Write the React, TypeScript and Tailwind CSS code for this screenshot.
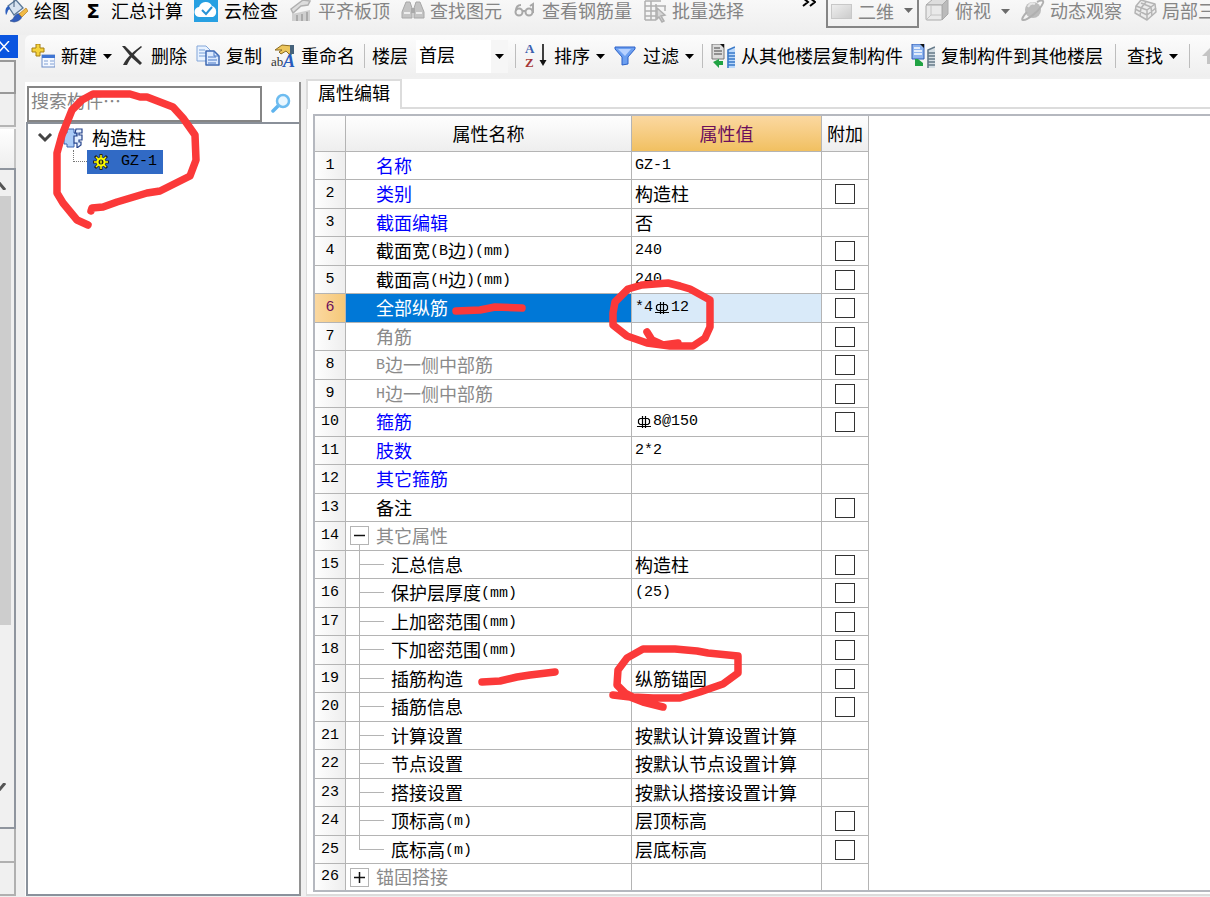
import type { ReactNode } from "react";

type Tone = "blue" | "black" | "gray" | "selected";
type Row = {
  name: string;
  value?: string;
  tone?: Tone;
  check?: boolean;
  branch?: "open" | "closed" | "child" | "last";
};

const rows: Row[] = [
  { name: "名称", value: "GZ-1", tone: "blue" },
  { name: "类别", value: "构造柱", tone: "blue", check: true },
  { name: "截面编辑", value: "否", tone: "blue" },
  { name: "截面宽(B边)(mm)", value: "240", check: true },
  { name: "截面高(H边)(mm)", value: "240", check: true },
  { name: "全部纵筋", value: "*4ф12", tone: "selected", check: true },
  { name: "角筋", tone: "gray", check: true },
  { name: "B边一侧中部筋", tone: "gray", check: true },
  { name: "H边一侧中部筋", tone: "gray", check: true },
  { name: "箍筋", value: "ф8@150", tone: "blue", check: true },
  { name: "肢数", value: "2*2", tone: "blue" },
  { name: "其它箍筋", tone: "blue" },
  { name: "备注", check: true },
  { name: "其它属性", tone: "gray", branch: "open" },
  { name: "汇总信息", value: "构造柱", check: true, branch: "child" },
  { name: "保护层厚度(mm)", value: "(25)", check: true, branch: "child" },
  { name: "上加密范围(mm)", check: true, branch: "child" },
  { name: "下加密范围(mm)", check: true, branch: "child" },
  { name: "插筋构造", value: "纵筋锚固", check: true, branch: "child" },
  { name: "插筋信息", check: true, branch: "child" },
  { name: "计算设置", value: "按默认计算设置计算", branch: "child" },
  { name: "节点设置", value: "按默认节点设置计算", branch: "child" },
  { name: "搭接设置", value: "按默认搭接设置计算", branch: "child" },
  { name: "顶标高(m)", value: "层顶标高", check: true, branch: "child" },
  { name: "底标高(m)", value: "层底标高", check: true, branch: "last" },
  { name: "锚固搭接", tone: "gray", branch: "closed" },
];

const tones: Record<Tone, string> = {
  blue: "text-[#0000ff]",
  black: "text-black",
  gray: "text-[#8a8a8a]",
  selected: "text-white",
};

/* Rebar grade mark: an oval crossed by two bars, with a base line */
function RebarMark() {
  return (
    <svg role="img" aria-label="三级钢" className="inline-block h-4 w-[18px]" viewBox="0 0 18 16" fill="none" stroke="#000" strokeWidth="1.2">
      <path d="M5 4.500h8l1.500 1.500v3L13 10.500H5L3.500 9V6z" />
      <path d="M7.500 2v12M10.500 2v12M2 12.500h14" />
    </svg>
  );
}

/* Latin runs take a half-width face beside full-width characters */
function Mixed({ text }: { text: string }) {
  const wide = /[\u4e00-\u9fff]/.test(text);
  return (
    <span className={`flex items-center whitespace-nowrap leading-[22px] ${wide ? "pb-[2px]" : ""}`}>
      {text.split(/([\x20-\x7e]+|ф)/).filter(Boolean).map((part, i) =>
        part === "ф" ? (
          <RebarMark key={i} />
        ) : /^[\x20-\x7e]/.test(part) ? (
          <span key={i} className={`font-['Liberation_Mono',monospace] text-[15px] ${wide ? "pt-1" : ""}`}>{part}</span>
        ) : (
          <span key={i}>{part}</span>
        )
      )}
    </span>
  );
}

function Caret({ gray }: { gray?: boolean }) {
  return (
    <svg className="h-[5px] w-[9px] shrink-0" viewBox="0 0 9 5" aria-hidden="true">
      <path d="M0 0h9L4.500 5z" fill={gray ? "#6b6b6b" : "#000"} />
    </svg>
  );
}

function Separator() {
  return <span className="h-6 w-px shrink-0 bg-[#bdbdbd]" />;
}

function Tool({ icon, label, gray, caret }: { icon?: ReactNode; label: string; gray?: boolean; caret?: boolean }) {
  return (
    <button type="button" className={`flex shrink-0 items-center ${gray ? "gap-[5px] text-[#858585]" : "gap-[6px] text-black"}`}>
      {icon && <span className="flex h-6 w-6 items-center justify-center">{icon}</span>}
      <span className="pb-[2px]">{label}</span>
      {caret && <Caret gray={gray} />}
    </button>
  );
}

const svg = { className: "h-6 w-6", viewBox: "0 0 24 24", fill: "none", "aria-hidden": true } as const;

const BucketIcon = () => (
  <svg {...svg}>
    <path d="M4 7l8-6 7 8-9 7z" fill="#d7e3f0" stroke="#5a7898" strokeWidth="1.300" />
    <path d="M5 7c-4 1-4 5-3 9 2-2 1-5 4-6" fill="#2d5fbe" />
    <path d="M10 0v8" stroke="#415d7c" />
    <path d="M9 20c2-5 5-6 8-5 2 3 0 7-7 8l-4-1z" fill="#315dbb" stroke="#244489" strokeWidth=".6" />
    <path d="M15 15l7-6 2 3-6 6z" fill="#f1ba45" stroke="#b27c25" strokeWidth=".7" />
  </svg>
);
const CloudIcon = () => (
  <svg {...svg}>
    <path d="M0 0h24v23H0z" fill="#27a0e2" />
    <path d="M6 18a5 5 0 0 1-1-10 7 7 0 0 1 13-1 6 6 0 0 1 1 11z" fill="#fff" />
    <path d="M8 11l4 4 6-7" stroke="#2793d6" strokeWidth="2" />
  </svg>
);
const SlabIcon = () => (
  <svg {...svg}>
    <path d="M2 10L14 1l7 1-2 4-7 1-8 7z" fill="#ddd" stroke="#b0b0b0" strokeWidth="1.500" />
    <path d="M3 15l18-4v11H3z" fill="#cfcfcf" />
    <path d="M8 16v6M13 15v7M18 13v9" stroke="#aaa" strokeWidth="2" />
  </svg>
);
const BinocularsIcon = () => (
  <svg {...svg}>
    <path d="M5 3h4l2 6v10H1v-6zM15 3h4l4 10v6H13V9z" fill="#c4c4c4" stroke="#a8a8a8" />
    <path d="M10 9h4v5h-4z" fill="#aaa" />
    <path d="M3 14h6M15 14h6" stroke="#eee" strokeWidth="2" />
  </svg>
);
const GlassesIcon = () => (
  <svg {...svg} stroke="#a8a8a8" strokeWidth="2">
    <circle cx="6" cy="13" r="3.500" />
    <circle cx="16" cy="13" r="3.500" />
    <path d="M3 12c0-4 2-6 5-6M9 12h4M20 14V5l-3 2" />
  </svg>
);
const BatchIcon = () => (
  <svg {...svg} stroke="#b0b0b0" strokeWidth="1.500">
    <path d="M2 2h16M2 7h21M2 12h12M2 17h11M2 21h11M2 2v19M8 2v19M13 5v16M22 7v5" />
    <path d="M14 9l8 7-4 1 3 5-2 1-3-5-2 2z" fill="#d6d6d6" />
  </svg>
);
const CubeIcon = () => (
  <svg {...svg} stroke="#aaa" strokeLinejoin="round">
    <path d="M1 6l7-6h15l-6 6z" fill="#ddd" />
    <path d="M17 6l6-6v15l-6 6z" fill="#bbb" />
    <rect x="1" y="6" width="16" height="15" rx="1" fill="#e9e9e9" />
    <path d="M6 6v10h11M6 16l-4 4" stroke="#c4c4c4" />
  </svg>
);
const OrbitIcon = () => (
  <svg {...svg}>
    <circle cx="12" cy="11" r="8" fill="#bcbcbc" />
    <path d="M6 13c-4 4-6 8-4 8 3 1 17-9 20-17 1-3-2-3-6-1" stroke="#b0b0b0" strokeWidth="2" />
    <path d="M7 8c2-4 5-4 7-3" stroke="#e7e7e7" strokeWidth="2" />
  </svg>
);
const GridCubeIcon = () => (
  <svg {...svg} stroke="#b4b4b4" strokeWidth="1.500" strokeLinejoin="round">
    <path d="M8 1l14 4 1 8-9 8L2 14l1-7z" fill="#ececec" />
    <path d="M3 7l11 4 8-6M14 11v10M8 9l-1 8M8 4l10 4M18 8l1 9M13 3L8 9M2 10l12 6 9-7" />
  </svg>
);
const NewIcon = () => (
  <svg {...svg}>
    <path d="M5 0h4v4h4v4H9v4H5V8H1V4h4z" fill="#f5d33c" stroke="#a57f13" />
    <rect x="11" y="11" width="13" height="12" fill="#f4f8ff" stroke="#6c8dc7" />
    <path d="M11 11h13v3H11z" fill="#3f75d3" />
    <path d="M13 17h4M19 17h4M13 20h4M19 20h4" stroke="#a6bde2" strokeWidth="1.500" />
  </svg>
);
const DeleteIcon = () => (
  <svg {...svg} fill="#333">
    <path d="M1 2h3l17 17-2 2L10 13z" />
    <path d="M20 2l1 1C14 9 9 14 6 21H2C6 13 13 7 20 2z" />
  </svg>
);
const CopyIcon = () => (
  <svg {...svg} strokeLinejoin="round">
    <path d="M1 2h9l4 4v11H1z" fill="#e8f2ff" stroke="#83a6d9" />
    <path d="M3 6h6M3 9h8M3 12h8" stroke="#779fd8" />
    <path d="M10 7h8l5 5v9H10z" fill="#dceaff" stroke="#3e68b2" strokeWidth="1.500" />
    <path d="M18 7v5h5M12 13h8M12 16h9M12 19h8" stroke="#4a79c4" />
  </svg>
);
const RenameIcon = () => (
  <svg {...svg}>
    <path d="M4 6l7-5 10 1v8h-3l-3-3-5 3-2-2 3-2H5z" fill="#edc65c" stroke="#8d6c22" />
    <path d="M19 1h4v9h-4z" fill="#45627b" />
    <text x="0" y="22" className="fill-[#333] font-['Liberation_Serif',serif] text-[13px]">ab</text>
    <text x="12" y="23" className="fill-[#285bbc] font-['Liberation_Serif',serif] text-[18px] font-bold italic">A</text>
  </svg>
);
const SortIcon = () => (
  <svg {...svg}>
    <text x="1" y="9" className="fill-[#3b5fae] font-['Liberation_Serif',serif] text-[13px] font-bold">A</text>
    <text x="1" y="23" className="fill-[#a63838] font-['Liberation_Serif',serif] text-[13px] font-bold">Z</text>
    <path d="M19 0v20" stroke="#111" strokeWidth="1.600" />
    <path d="M15.500 16h7L19 22z" fill="#111" />
  </svg>
);
const FilterIcon = () => (
  <svg {...svg}>
    <path d="M2 3h20v2l-7 8v7l-6 1v-8L2 5z" fill="#6c9ff0" stroke="#2b61c8" />
    <path d="M5 5h13l-6 7z" fill="#b6d1ff" />
  </svg>
);
function FloorCopyIcon({ to }: { to?: boolean }) {
  return (
    <svg {...svg}>
      <path d="M1 0h12v15H1z" fill={to ? "#8eb4ef" : "#ddd"} stroke={to ? "#315db3" : "#777"} />
      <path d="M9 0h4v4z" fill="#111" />
      <path d="M3 4h6M3 7h8M3 10h8" stroke={to ? "#fff" : "#777"} strokeWidth="1.500" />
      <path d={to ? "M4 15v7h8v-3l-5-4z" : "M2 18l6 6v-3h4v-4H8v-2z"} fill="#21a344" />
      <path d="M16 6l8-3v21h-8z" fill={to ? "#d4dde3" : "#bad8fa"} />
      <path d="M24 3l-7 3v18M17 9h7M17 12h7M17 15h7M17 18h7M17 21h7" stroke={to ? "#657988" : "#3978c7"} strokeWidth="1.500" />
    </svg>
  );
}

function TopToolbar() {
  return (
    <div className="flex h-[35px] items-start overflow-x-clip bg-linear-to-b from-[#f8f8f8] to-[#eeeeee] pl-1">
      <div className="flex h-[22px] shrink-0 items-center gap-[11px]">
        <Tool icon={<BucketIcon />} label="绘图" />
        <Tool icon={<span className="font-['DejaVu_Sans',sans-serif] text-xl font-bold">Σ</span>} label="汇总计算" />
        <Tool icon={<CloudIcon />} label="云检查" />
        <Tool icon={<SlabIcon />} label="平齐板顶" gray />
        <Tool icon={<BinocularsIcon />} label="查找图元" gray />
        <Tool icon={<GlassesIcon />} label="查看钢筋量" gray />
        <Tool icon={<BatchIcon />} label="批量选择" gray />
      </div>
      <button type="button" aria-label="更多" className="ml-[58px] w-[14px] shrink-0">
        <svg className="h-2 w-[14px]" viewBox="0 0 14 8" fill="none" stroke="#000" strokeWidth="2" aria-hidden="true">
          <path d="M1-2l5 4-5 4M8-2l5 4-5 4" />
        </svg>
      </button>
      <div className="relative ml-[10px] flex h-7 w-[93px] shrink-0 items-start border-2 border-t-0 border-[#858585] pl-[3px]">
        <span className="mt-1 h-[15px] w-[21px] shrink-0 border border-[#c8c8c8] bg-linear-to-br from-[#eee] to-[#ccc]" />
        <select aria-label="视图模式" className="h-[22px] w-full appearance-none bg-transparent pb-[2px] pl-[6px] text-[#858585]">
          <option>二维</option>
        </select>
        <span className="pointer-events-none absolute right-1 top-2 flex"><Caret gray /></span>
      </div>
      <div className="ml-[6px] flex h-[22px] shrink-0 items-center gap-[11px]">
        <button type="button" className="flex items-center gap-[10px] text-[#858585]">
          <span className="flex items-center gap-[6px]"><CubeIcon /><span className="pb-[2px]">俯视</span></span>
          <Caret gray />
        </button>
        <Tool icon={<OrbitIcon />} label="动态观察" gray />
        <Tool icon={<GridCubeIcon />} label="局部三" gray />
      </div>
    </div>
  );
}

function ComponentToolbar() {
  return (
    <div className="flex h-[42px] items-center overflow-hidden rounded-tl-md bg-linear-to-b from-[#fcfcfc] to-[#efefef] pl-[6px]">
      <div className="flex shrink-0 items-center gap-[9px]">
        <Tool icon={<NewIcon />} label="新建" caret />
        <Tool icon={<DeleteIcon />} label="删除" />
        <Tool icon={<CopyIcon />} label="复制" />
        <Tool icon={<RenameIcon />} label="重命名" />
        <Separator />
      </div>
      <label htmlFor="floor" className="ml-[7px] shrink-0 pb-[2px]">楼层</label>
      <div className="relative ml-2 mr-[7px] h-[33px] w-[92px] shrink-0 bg-white pl-[3px] pr-4">
        <select id="floor" className="h-full w-full appearance-none bg-transparent pb-1 text-black">
          <option>首层</option>
        </select>
        <span className="pointer-events-none absolute inset-y-0 right-0 flex w-[17px] items-center justify-center bg-[#f6f6f6]"><Caret /></span>
      </div>
      <div className="flex shrink-0 items-center gap-2">
        <Separator />
        <Tool icon={<SortIcon />} label="排序" caret />
        <Tool icon={<FilterIcon />} label="过滤" caret />
        <Separator />
        <Tool icon={<FloorCopyIcon />} label="从其他楼层复制构件" />
        <Tool icon={<FloorCopyIcon to />} label="复制构件到其他楼层" />
      </div>
      <div className="ml-3 flex shrink-0 items-center gap-[11px]">
        <Separator />
        <Tool label="查找" caret />
        <Separator />
        <button type="button" aria-label="上移">
          <svg {...svg}><path d="M10 3l9 9h-5v8H6v-8H1z" fill="#c4c4c4" /></svg>
        </button>
      </div>
    </div>
  );
}

function DockStrip() {
  return (
    <aside className="flex w-[25px] shrink-0 flex-col pr-[9px]">
      <button type="button" aria-label="关闭" className="flex h-[23px] w-[18px] items-center bg-[#0a55e0]">
        <svg className="h-[11px] w-[10px]" viewBox="0 0 10 11" stroke="#fff" strokeWidth="1.400" aria-hidden="true"><path d="M-1 0l10 11M9 0L-1 11" /></svg>
      </button>
      <div className="mt-[2px] h-[34px] border-2 border-l-0 border-[#999]" />
      <div className="h-[33px] border-b-2 border-r-2 border-[#b5b5b5]" />
      <div className="mt-[2px] h-[39px] border-r-2 border-[#c4c4c4] bg-linear-to-b from-white to-[#eee]" />
      <div className="flex flex-1 flex-col border-y-2 border-r-2 border-[#8f959e] pr-[3px]">
        <svg className="mt-3 h-2 w-[6px]" viewBox="0 0 6 8" fill="none" stroke="#555" strokeWidth="3" aria-hidden="true"><path d="M-5 8l5-6 5 6" /></svg>
        <div className="mt-[6px] basis-[429px] bg-[#cdcdcd]" />
        <svg className="mb-9 mt-auto h-2 w-[6px]" viewBox="0 0 6 8" fill="none" stroke="#555" strokeWidth="3" aria-hidden="true"><path d="M-5 0l5 6 5-6" /></svg>
      </div>
      <div className="h-[34px] border-b-2 border-r-2 border-[#b0b0b0]" />
      <div className="mb-[2px] h-[33px] border-b-2 border-r-2 border-[#b0b0b0]" />
    </aside>
  );
}

function ComponentTree() {
  return (
    <section className="mb-[2px] mt-[5px] flex w-[276px] shrink-0 flex-col border-r-2 border-[#929292] bg-white pl-px">
      <div className="flex h-[42px] items-end border-b-2 border-[#8a9099] pl-px pt-1">
        <input type="text" aria-label="搜索构件" placeholder="搜索构件…" className="h-[36px] w-[235px] border-2 border-[#858585] bg-white pb-2 pl-[2px] outline-none placeholder:text-[#858585]" />
        <button type="button" aria-label="搜索" className="flex h-full flex-1 items-center justify-center">
          <svg className="h-[22px] w-5" viewBox="0 0 20 22" fill="none" aria-hidden="true">
            <path d="M8 12l-6 6" stroke="#5fb4ee" strokeWidth="3.500" strokeLinecap="round" />
            <circle cx="12" cy="8" r="6" fill="#eaf7ff" stroke="#6dbcf0" strokeWidth="2.500" />
          </svg>
        </button>
      </div>
      <div className="flex-1 border-b-2 border-l-2 border-[#8a929c] pl-[9px] pt-px">
        <div className="flex h-[25px] items-center">
          <svg className="h-[10px] w-4" viewBox="0 0 16 10" fill="none" stroke="#444" strokeWidth="3" aria-hidden="true"><path d="M2 1l6 6 6-6" /></svg>
          <span className="ml-[6px] w-1 border-t border-dotted border-[#777]" />
          <svg className="h-5 w-5" viewBox="0 0 20 20" aria-hidden="true">
            <path d="M4 1h7v4h3v10h-3v4H4v-3H1V5h3z" fill="#a9cbf7" stroke="#3a62b0" />
            <path d="M13 1h6v4h-3v2h3v5h-3v2h2v3l-4 3v-5h-3V8h3V5h-2z" fill="#e3efff" stroke="#24428a" strokeWidth="1.200" />
          </svg>
          <span className="ml-[9px] pb-[2px]">构造柱</span>
        </div>
        <div className="flex h-6 pl-[36px]">
          <span className="h-3 w-[14px] border-b border-l border-dotted border-[#777]" />
          <span className="flex h-6 w-[76px] items-center bg-[#316ac5] pl-[6px]">
            <svg className="h-4 w-4" viewBox="0 0 16 16" aria-hidden="true" fill="none">
              <path d="M8 0v16M0 8h16M2 2l12 12M14 2L2 14" stroke="#222" strokeWidth="3" />
              <path d="M8 1v14M1 8h14M3 3l10 10M13 3L3 13" stroke="#ff0" strokeWidth="1.500" />
              <circle cx="8" cy="8" r="3.500" fill="#222" stroke="#ff0" strokeWidth="2" />
              <path d="M8 6.500v3" stroke="#ff0" strokeWidth="1.500" />
            </svg>
            <span className="ml-3 font-['Liberation_Mono',monospace] text-[15px]">GZ-1</span>
          </span>
        </div>
      </div>
    </section>
  );
}

function Branch({ kind }: { kind?: Row["branch"] }) {
  if (kind === "open" || kind === "closed") {
    return (
      <span className="flex h-full w-[30px] shrink-0 flex-col pl-1">
        <button type="button" aria-label={kind === "open" ? "折叠" : "展开"} className="mt-1 flex h-[19px] w-[19px] shrink-0 items-center justify-center border border-[#b4b4b4] bg-white">
          <svg className="h-[11px] w-[11px]" viewBox="0 0 11 11" stroke="#111" strokeWidth="1.500" aria-hidden="true">
            <path d={kind === "open" ? "M0 5.500h11" : "M0 5.500h11M5.500 0v11"} />
          </svg>
        </button>
        {kind === "open" && <span className="ml-[9px] flex-1 border-l border-[#b4b4b4]" />}
      </span>
    );
  }
  if (kind) {
    return (
      <span className="flex h-full w-[45px] shrink-0 flex-col pl-[13px]">
        <span className="h-[14px] w-[25px] shrink-0 border-b border-l border-[#b4b4b4]" />
        {kind === "child" && <span className="flex-1 border-l border-[#b4b4b4]" />}
      </span>
    );
  }
  return <span className="w-[30px] shrink-0" />;
}

function PropertyTable() {
  return (
    <table className="w-[554px] table-fixed border-separate border-spacing-0">
      <colgroup>
        <col className="w-[31px]" />
        <col className="w-[286px]" />
        <col className="w-[190px]" />
        <col className="w-[47px]" />
      </colgroup>
      <thead>
        <tr className="h-9">
          {["", "属性名称", "属性值", "附加"].map((h) => (
            <th key={h} scope="col" className={`whitespace-nowrap border-b border-r border-[#b4b4b4] bg-linear-to-b p-0 pb-[2px] font-normal ${h === "属性值" ? "from-[#fbd8a0] to-[#f1c060] text-[#6b0f5c]" : "from-[#fefefe] to-[#eeeeee]"}`}>
              {h}
            </th>
          ))}
        </tr>
      </thead>
      <tbody>
        {rows.map((r, i) => {
          const selected = r.tone === "selected";
          const last = i === rows.length - 1;
          const height = last ? "h-[26px]" : i % 2 ? "h-[28px]" : "h-[27px]";
          const edge = last ? "border-r border-[#b4b4b4] p-0" : "border-b border-r border-[#b4b4b4] p-0";
          return (
            <tr key={r.name}>
              <th scope="row" className={`${edge} bg-linear-to-r font-['Liberation_Mono',monospace] text-[15px] font-normal ${selected ? "from-[#fbd8a0] to-[#f5c878] text-[#6b0f5c]" : "from-[#fefefe] to-[#eeeeee]"}`}>
                {i + 1}
              </th>
              <td className={`${edge} ${selected ? "bg-[#0078d7]" : "bg-white"}`}>
                <div className={`flex items-center ${height} ${tones[r.tone ?? "black"]}`}>
                  <Branch kind={r.branch} />
                  <Mixed text={r.name} />
                </div>
              </td>
              <td className={`${edge} pl-[3px] ${selected ? "bg-[#d9eaf9]" : "bg-white"}`}>
                {r.value && <Mixed text={r.value} />}
              </td>
              <td className={edge}>
                {r.check && (
                  <input type="checkbox" aria-label={`附加 ${r.name}`} className="mx-auto block h-5 w-5 appearance-none border border-[#333] bg-white" />
                )}
              </td>
            </tr>
          );
        })}
      </tbody>
    </table>
  );
}

/* Hand-drawn marker strokes lying over the window */
function Markup() {
  return (
    <svg className="pointer-events-none absolute left-0 top-0 h-[897px] w-[1210px]" viewBox="0 0 1210 897" fill="none" stroke="#fb3939" strokeWidth="7.500" strokeLinecap="round" strokeLinejoin="round" aria-hidden="true">
      <path d="M88 225L77 220 63 203 57 193V153L62 135 72 110 82 100 93 94H130L140 97H147L173 107 183 118 195 135 196 160 190 176 182 180 160 191 147 193 117 202 103 207 92 208 91 211" />
      <path d="M647 332L652 340 663 345 678 343M642 285L668 283 680 286 690 289 710 300V327L705 338 693 346H670L647 343 627 336 613 325V313L615 302 628 289 642 285" />
      <path d="M456 311L480 310 495 307 522 308" />
      <path d="M482 682L500 681 517 677 530 675 555 672" />
      <path d="M613 695L630 697 643 702 663 707M633 697L653 698H680L700 692 723 684 738 673V656L708 653 697 651 675 649H643L627 658 618 670 617 685 625 693 633 697" />
    </svg>
  );
}

export default function App() {
  return (
    <div className="relative flex min-h-screen flex-col overflow-hidden bg-[#f0f0f0] font-['Noto_Sans_CJK_SC',sans-serif] text-[18px] leading-[22px] text-black">
      <TopToolbar />
      <div className="flex flex-1">
        <DockStrip />
        <div className="flex min-w-0 flex-1 flex-col">
          <ComponentToolbar />
          <div className="flex flex-1">
            <ComponentTree />
            <main className="ml-[5px] mt-[2px] flex min-w-0 flex-1 flex-col">
              <div className="flex bg-white">
                <button type="button" className="h-[30px] w-[96px] border-l-2 border-r-2 border-t-2 border-[#dcdcdc] bg-white pb-[6px] text-center">属性编辑</button>
                <span className="flex-1 border-b-2 border-[#dcdcdc]" />
              </div>
              <div className="mb-[2px] flex-1 border-b-2 border-l border-[#dcdcdc] bg-white pb-[2px] pl-[6px] pt-[5px]">
                <div className="border-y-2 border-l-2 border-[#b5b8bf]">
                  <PropertyTable />
                </div>
              </div>
            </main>
          </div>
        </div>
      </div>
      <Markup />
    </div>
  );
}
